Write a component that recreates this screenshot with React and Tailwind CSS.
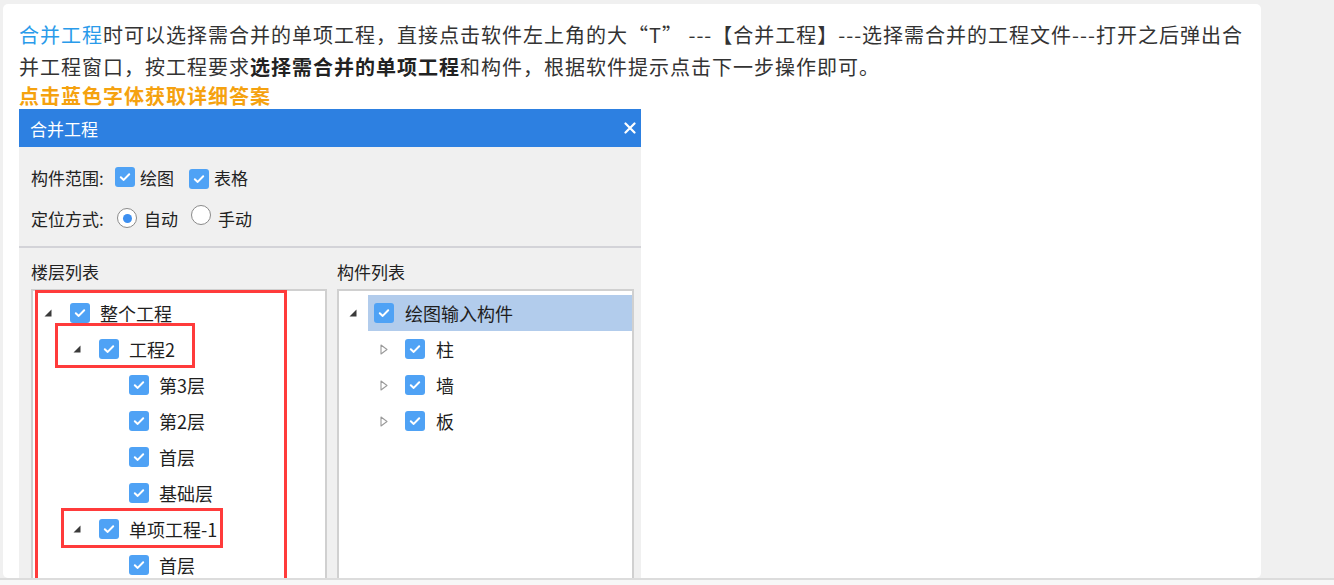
import React from "react";

const FONT = { fontFamily: '"Noto Sans CJK SC", "Microsoft YaHei", "Noto Sans", sans-serif' };

function Check() {
  return (
    <span className="inline-flex w-[20px] h-[20px] rounded-[3px] bg-[#4fa2f5] items-center justify-center shrink-0">
      <svg width="12" height="10" viewBox="0 0 12 10">
        <path d="M1.8 5.2 L4.7 7.9 L10.2 2.2" fill="none" stroke="white" strokeWidth="2" strokeLinecap="round" strokeLinejoin="round" />
      </svg>
    </span>
  );
}

function Radio({ on }) {
  return (
    <span className="inline-flex w-[20px] h-[20px] rounded-full bg-white border-[1.5px] border-[#8a8a8a] items-center justify-center shrink-0">
      {on ? <span className="w-[9px] h-[9px] rounded-full bg-[#3d8ff0]" /> : null}
    </span>
  );
}

function Expanded() {
  return (
    <svg width="8" height="8" viewBox="0 0 8 8">
      <polygon points="7.5,0.5 7.5,7.5 0.5,7.5" fill="#3a3a3a" />
    </svg>
  );
}

function Collapsed() {
  return (
    <svg width="8" height="11" viewBox="0 0 8 11">
      <polygon points="1,1 7,5.5 1,10" fill="none" stroke="#9a9a9a" strokeWidth="1.1" strokeLinejoin="round" />
    </svg>
  );
}

function LeftRow({ pad, tri, label }) {
  return (
    <div className={`h-[36px] flex items-center ${pad}`}>
      <span className="w-[26px] flex items-center">{tri ? <Expanded /> : null}</span>
      <Check />
      <span className="ml-[10px] text-[18px] text-[#1f1f1f] leading-none whitespace-nowrap">{label}</span>
    </div>
  );
}

export default function App() {
  return (
    <div className="w-[1334px] h-[585px] bg-[#f0f0f0] overflow-hidden flex flex-col" style={FONT}>
      <div className="ml-[3px] mt-[4px] w-[1258px] h-[574px] bg-white rounded-[5px] overflow-hidden pl-[16px] pt-[15px] shrink-0">
        <p className="text-[20px] leading-[32px] tracking-[1px] text-[#333333] whitespace-nowrap">
          <span className="text-[#2a9bea]">合并工程</span>时可以选择需合并的单项工程，直接点击软件左上角的大“T” ---【合并工程】---选择需合并的工程文件---打开之后弹出合
          <br />
          并工程窗口，按工程要求<b className="font-bold text-[#222222]">选择需合并的单项工程</b>和构件，根据软件提示点击下一步操作即可。
        </p>
        <p className="text-[20px] leading-[26px] tracking-[1px] font-bold text-[#f5a20f] whitespace-nowrap">点击蓝色字体获取详细答案</p>

        <div className="w-[622px] bg-[#f0f0f0]">
          <div className="h-[38px] bg-[#2d80e1] flex items-center justify-between pl-[11px] pr-[5px]">
            <span className="text-[17px] text-white leading-none">合并工程</span>
            <svg width="12" height="12" viewBox="0 0 12 12">
              <path d="M1.5 1.5 L10.5 10.5 M10.5 1.5 L1.5 10.5" stroke="white" strokeWidth="2.2" strokeLinecap="round" />
            </svg>
          </div>

          <div className="pt-[16px] pb-[14px] pl-[12px] text-[17px] text-[#222222]">
            <div className="h-[28px] flex items-center">
              <span className="w-[84px] whitespace-nowrap leading-none">构件范围:</span>
              <Check />
              <span className="ml-[5px] leading-none">绘图</span>
              <span className="ml-[15px]"><Check /></span>
              <span className="ml-[5px] leading-none">表格</span>
            </div>
            <div className="h-[28px] mt-[13px] flex items-center">
              <span className="w-[86px] whitespace-nowrap leading-none">定位方式:</span>
              <Radio on />
              <span className="ml-[7px] leading-none">自动</span>
              <span className="ml-[13px]"><Radio /></span>
              <span className="ml-[7px] leading-none">手动</span>
            </div>
          </div>
          <div className="h-[2px] bg-[#d3d3d8]" />

          <div className="flex pl-[12px] pr-[7px] pt-[11px] gap-[10px] text-[17px] text-[#222222]">
            <div className="w-[296px] flex flex-col">
              <div className="h-[24px] flex items-center leading-none">楼层列表</div>
              <div className="relative mt-[6px]">
                <div className="h-[320px] bg-white border-2 border-[#d0d0d0] pt-[4px]">
                  <LeftRow pad="pl-[11px]" tri label="整个工程" />
                  <LeftRow pad="pl-[40px]" tri label="工程2" />
                  <LeftRow pad="pl-[70px]" label="第3层" />
                  <LeftRow pad="pl-[70px]" label="第2层" />
                  <LeftRow pad="pl-[70px]" label="首层" />
                  <LeftRow pad="pl-[70px]" label="基础层" />
                  <LeftRow pad="pl-[40px]" tri label="单项工程-1" />
                  <LeftRow pad="pl-[70px]" label="首层" />
                </div>
                <div className="absolute left-[4px] top-[1px] w-[252px] h-[330px] border-[3px] border-[#ff3b3b]" />
                <div className="absolute left-[24px] top-[34px] w-[140px] h-[45px] border-[3px] border-[#ff3b3b]" />
                <div className="absolute left-[30px] top-[219px] w-[162px] h-[40px] border-[3px] border-[#ff3b3b]" />
              </div>
            </div>

            <div className="w-[297px] flex flex-col">
              <div className="h-[24px] flex items-center leading-none">构件列表</div>
              <div className="mt-[6px] h-[320px] bg-white border-2 border-[#d0d0d0] pt-[4px]">
                <div className="h-[36px] flex items-center pl-[10px]">
                  <span className="w-[19px] flex items-center"><Expanded /></span>
                  <div className="flex-1 h-full bg-[#b2ccec] flex items-center pl-[6px]">
                    <Check />
                    <span className="ml-[11px] text-[18px] text-[#1f1f1f] leading-none">绘图输入构件</span>
                  </div>
                </div>
                {["柱", "墙", "板"].map((t) => (
                  <div key={t} className="h-[36px] flex items-center pl-[41px]">
                    <span className="w-[19px] flex items-center"><Collapsed /></span>
                    <span className="pl-[6px] flex items-center">
                      <Check />
                      <span className="ml-[11px] text-[18px] text-[#1f1f1f] leading-none">{t}</span>
                    </span>
                  </div>
                ))}
              </div>
            </div>
          </div>
        </div>
      </div>
      <div className="h-[2px] bg-[#dcdcdc] shrink-0" />
      <div className="flex-1 bg-[#f7f7f7]" />
    </div>
  );
}
